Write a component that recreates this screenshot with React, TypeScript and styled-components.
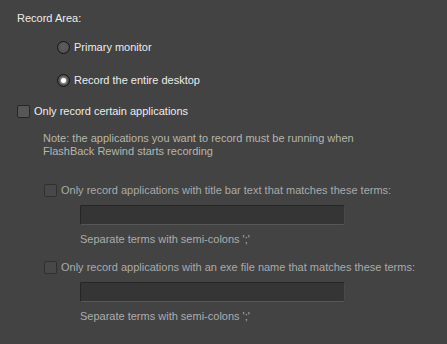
import React from "react";
import styled, { createGlobalStyle } from "styled-components";

const Global = createGlobalStyle`
  html, body { margin: 0; padding: 0; background: #434343; }
  body { width: 447px; height: 344px; overflow: hidden; }
`;

const Page = styled.div`
  width: 447px;
  height: 344px;
  background: #434343;
  font-family: "Liberation Sans", Arial, sans-serif;
  font-size: 11px;
  color: #ececec;
  display: flex;
  flex-direction: column;
  padding: 11px 0 0 17px;
  box-sizing: border-box;
`;

const Label = styled.div`
  line-height: 14px;
  height: 14px;
`;

const RadioGroup = styled.div`
  display: flex;
  flex-direction: column;
  gap: 19px;
  margin: 15px 0 0 40px;
`;

const OptionRow = styled.label<{ $dim?: boolean }>`
  display: flex;
  align-items: center;
  gap: 4px;
  height: 14px;
  line-height: 14px;
  white-space: nowrap;
  color: ${(p) => (p.$dim ? "#aaaaaa" : "#ececec")};
`;

const RadioCircle = styled.span<{ $checked?: boolean }>`
  flex: none;
  width: 13px;
  height: 13px;
  border-radius: 50%;
  box-sizing: border-box;
  border: 1px solid #161616;
  background: radial-gradient(circle at 50% 45%, #5e5e5e 0%, #555 55%, #3e3e3e 100%);
  display: flex;
  align-items: center;
  justify-content: center;
  &::after {
    content: "";
    display: ${(p) => (p.$checked ? "block" : "none")};
    width: 5px;
    height: 5px;
    border-radius: 50%;
    background: #ffffff;
    box-shadow: 0 0 1px 1px rgba(255, 255, 255, 0.35);
  }
`;

const Box = styled.span<{ $disabled?: boolean }>`
  width: 13px;
  height: 13px;
  box-sizing: border-box;
  border: 1px solid ${(p) => (p.$disabled ? "#303030" : "#262626")};
  border-radius: 2px;
  background: ${(p) => (p.$disabled ? "#484848" : "#575757")};
  flex: none;
`;

const MainCheck = styled.div`
  margin-top: 17px;
`;

const Note = styled.div`
  margin: 14px 0 0 26px;
  color: #b6b6ac;
  line-height: 13px;
`;

const SubSection = styled.div<{ $first?: boolean }>`
  display: flex;
  flex-direction: column;
  margin: ${(p) => (p.$first ? "25px" : "14px")} 0 0 27px;
`;

const TextField = styled.div`
  margin: 8px 0 0 36px;
  width: 265px;
  height: 20px;
  box-sizing: border-box;
  background: #353535;
  border: 1px solid #252525;
  border-bottom-color: #575757;
  border-right-color: #4a4a4a;
  border-radius: 2px;
`;

const Hint = styled.div`
  margin: 7px 0 0 36px;
  color: #acacac;
  line-height: 14px;
`;

const Sub = ({ text, first }: { text: string; first?: boolean }) => (
  <SubSection $first={first}>
    <OptionRow $dim>
      <Box $disabled />
      {text}
    </OptionRow>
    <TextField />
    <Hint>Separate terms with semi-colons ';'</Hint>
  </SubSection>
);

export default function App() {
  return (
    <>
      <Global />
      <Page>
        <Label>Record Area:</Label>
        <RadioGroup>
          <OptionRow>
            <RadioCircle />
            Primary monitor
          </OptionRow>
          <OptionRow>
            <RadioCircle $checked />
            Record the entire desktop
          </OptionRow>
        </RadioGroup>
        <MainCheck>
          <OptionRow>
            <Box />
            Only record certain applications
          </OptionRow>
        </MainCheck>
        <Note>
          Note: the applications you want to record must be running when
          <br />
          FlashBack Rewind starts recording
        </Note>
        <Sub first text="Only record applications with title bar text that matches these terms:" />
        <Sub text="Only record applications with an exe file name that matches these terms:" />
      </Page>
    </>
  );
}
